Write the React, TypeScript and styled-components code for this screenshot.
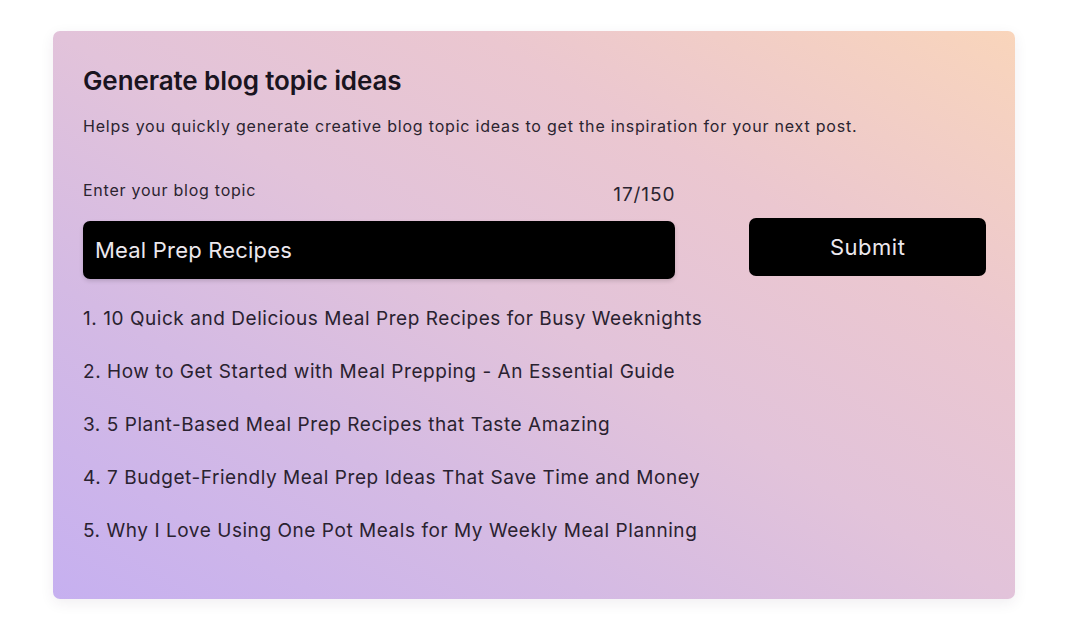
import React from "react";
import styled, { createGlobalStyle } from "styled-components";

const Global = createGlobalStyle`
  html, body { margin: 0; padding: 0; background: #ffffff; }
  body { font-family: Inter, "Noto Sans", sans-serif; }
`;

const Page = styled.div`
  width: 1080px;
  height: 644px;
  padding: 31px 0 0 53px;
  box-sizing: border-box;
`;

const Card = styled.section`
  width: 962px;
  height: 568px;
  box-sizing: border-box;
  padding: 34px 29px 0 30px;
  border-radius: 7px;
  background: linear-gradient(to top right, #c6b0f0 0%, #d4bae4 28%, #e2c3da 50%, #ebc7d0 72%, #f9d5bb 100%);
  box-shadow: 0 4px 14px rgba(60, 40, 80, 0.08);
`;

const Title = styled.h1`
  margin: 0;
  font-size: 26px;
  line-height: 32px;
  font-weight: 600;
  color: #1a1420;
  letter-spacing: -0.1px;
`;

const Description = styled.p`
  margin: 19px 0 0;
  font-size: 16px;
  line-height: 20px;
  letter-spacing: 0.8px;
  color: #2b2430;
`;

const FormRow = styled.div`
  display: flex;
  align-items: flex-end;
  gap: 74px;
  margin-top: 42px;
`;

const Field = styled.div`
  width: 593px;
  display: flex;
  flex-direction: column;
`;

const LabelRow = styled.div`
  display: flex;
  justify-content: space-between;
  align-items: baseline;
`;

const Label = styled.label`
  font-size: 16px;
  line-height: 20px;
  letter-spacing: 0.75px;
  color: #2b2430;
`;

const Counter = styled.span`
  font-size: 19px;
  line-height: 24px;
  letter-spacing: 0.9px;
  color: #2b2430;
  position: relative;
  top: 5px;
`;

const Input = styled.div`
  margin-top: 19px;
  height: 58px;
  background: #000;
  border-radius: 7px;
  display: flex;
  align-items: center;
  padding-left: 12px;
  font-size: 22px;
  letter-spacing: 0.2px;
  color: #ece8ee;
  box-shadow: 0 2px 4px rgba(0, 0, 0, 0.15);
`;

const Submit = styled.button`
  width: 237px;
  height: 58px;
  margin-bottom: 3px;
  border: none;
  border-radius: 7px;
  background: #000;
  color: #ece8ee;
  font-family: inherit;
  font-size: 22px;
  letter-spacing: 0.5px;
  cursor: pointer;
`;

const Ideas = styled.ol`
  list-style: none;
  margin: 29px 0 0;
  padding: 0;
  display: flex;
  flex-direction: column;
  gap: 31px;
`;

const Idea = styled.li`
  font-size: 19px;
  line-height: 22px;
  letter-spacing: 0.55px;
  color: #2a2230;
`;

const ideas = [
  "1. 10 Quick and Delicious Meal Prep Recipes for Busy Weeknights",
  "2. How to Get Started with Meal Prepping - An Essential Guide",
  "3. 5 Plant-Based Meal Prep Recipes that Taste Amazing",
  "4. 7 Budget-Friendly Meal Prep Ideas That Save Time and Money",
  "5. Why I Love Using One Pot Meals for My Weekly Meal Planning",
];

export default function App() {
  const topic = "Meal Prep Recipes";
  return (
    <Page>
      <Global />
      <Card>
        <Title>Generate blog topic ideas</Title>
        <Description>
          Helps you quickly generate creative blog topic ideas to get the inspiration for your next post.
        </Description>
        <FormRow>
          <Field>
            <LabelRow>
              <Label>Enter your blog topic</Label>
              <Counter>{topic.length}/150</Counter>
            </LabelRow>
            <Input>{topic}</Input>
          </Field>
          <Submit>Submit</Submit>
        </FormRow>
        <Ideas>
          {ideas.map((t) => (
            <Idea key={t}>{t}</Idea>
          ))}
        </Ideas>
      </Card>
    </Page>
  );
}
